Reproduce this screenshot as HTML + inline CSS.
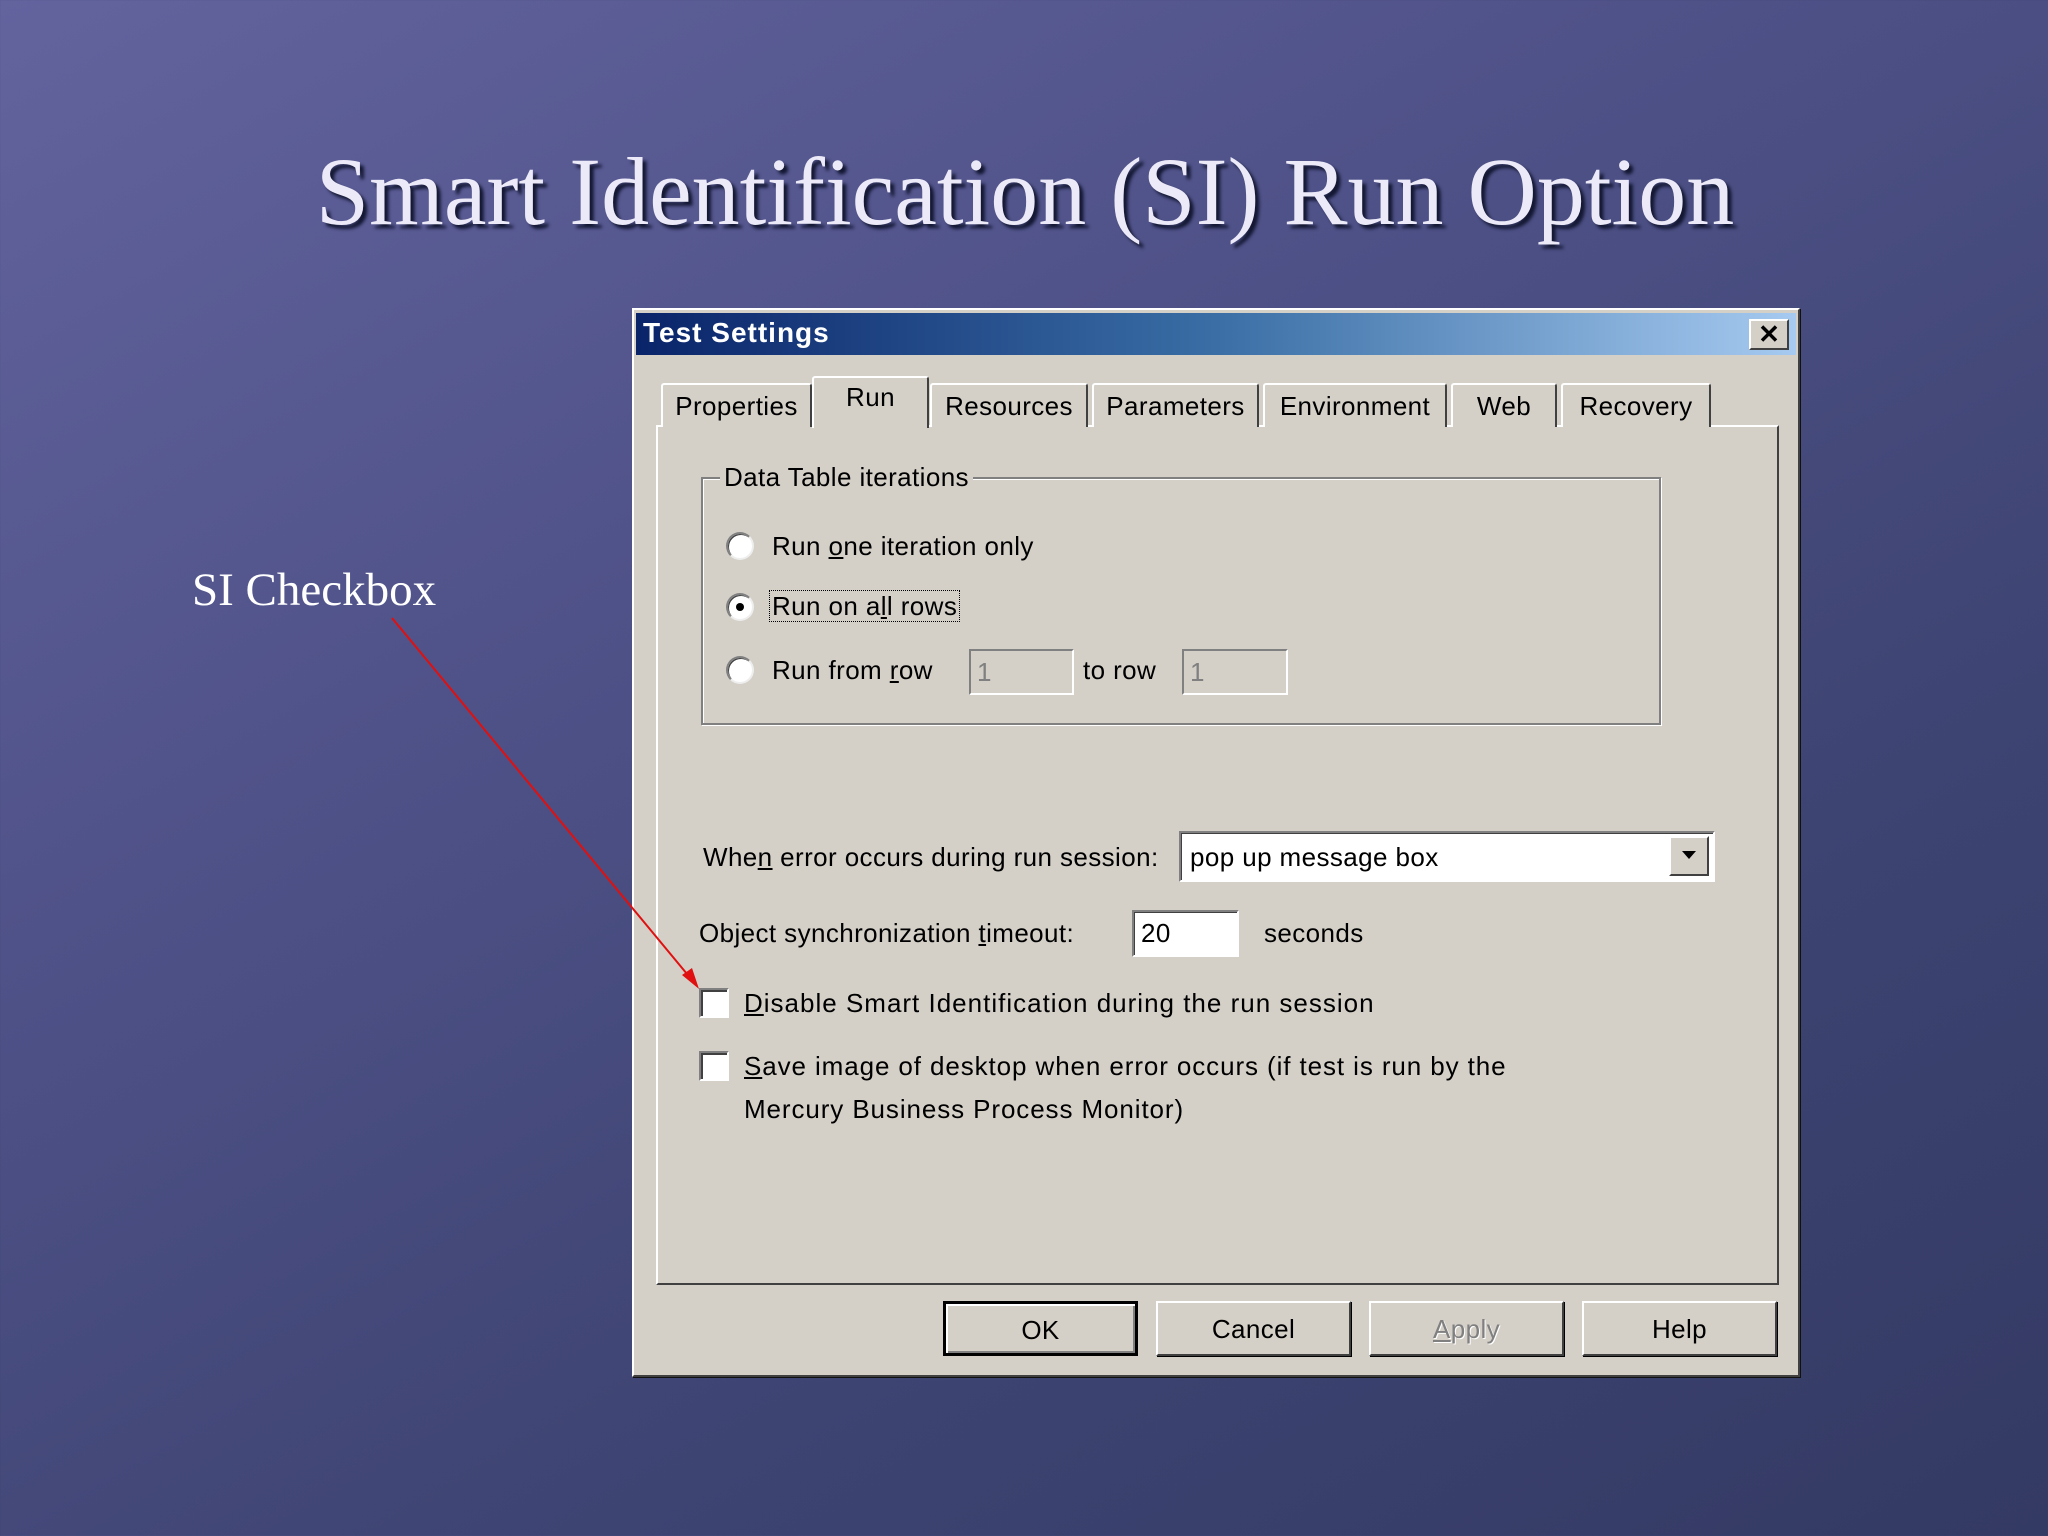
<!DOCTYPE html>
<html><head><meta charset="utf-8"><style>
*{margin:0;padding:0;box-sizing:border-box}
body{width:2048px;height:1536px;overflow:hidden;position:relative;font-family:"Liberation Sans",sans-serif;
background:linear-gradient(150deg,#63639e 0%,#4f5288 35%,#3f4574 65%,#333a63 100%)}
.a{position:absolute}
.t{font-size:26px;color:#000;white-space:nowrap;line-height:30px;letter-spacing:0.4px}
.title{left:0;width:2050px;top:132px;text-align:center;font-family:"Liberation Serif",serif;font-size:96px;color:#eceaf8;text-shadow:4px 4px 3px #141833;line-height:120px}
.dlg{left:632px;top:308px;width:1168px;height:1069px;background:#d4d0c8;border:2px solid #fff;border-right-color:#404040;border-bottom-color:#404040;box-shadow:1px 1px 0 #111}
.tb{left:636px;top:313px;width:1160px;height:42px;background:linear-gradient(90deg,#0a246a,#3a6ea5 50%,#a6caf0)}
.tab{position:absolute;top:383px;height:44px;background:#d4d0c8;border:2px solid #fff;border-bottom:none;border-right:2px solid #404040;border-radius:3px 3px 0 0;text-align:center;padding-top:6px}
.panel{left:656px;top:425px;width:1123px;height:860px;border:2px solid #fff;border-right-color:#404040;border-bottom-color:#404040}
.radio{width:28px;height:28px;border-radius:50%;background:#fff;border:2px solid #808080;border-bottom-color:#eee;border-right-color:#eee;box-shadow:inset 1px 1px 0 #404040}
.inp{background:#fff;border:2px solid #808080;border-right-color:#fff;border-bottom-color:#fff;box-shadow:inset 1px 1px 0 #404040}
.cb{width:30px;height:30px;background:#fff;border:2px solid #808080;border-right-color:#fff;border-bottom-color:#fff;box-shadow:inset 2px 2px 0 #404040}
.btn{top:1301px;height:55px;width:195px;border:2px solid #fff;border-right-color:#404040;border-bottom-color:#404040;box-shadow:1px 1px 0 #000;text-align:center;padding-top:11px}
u{text-decoration:underline}
</style></head><body>
<div class="a title">Smart Identification (SI) Run Option</div>
<div class="a" style="left:192px;top:563px;font-family:'Liberation Serif',serif;font-size:47px;color:#fff">SI Checkbox</div>

<div class="a dlg"></div>
<div class="a tb"></div>
<div class="a" style="left:643px;top:317px;font-size:28px;font-weight:bold;color:#fff;letter-spacing:1px">Test Settings</div>
<div class="a" style="left:1749px;top:319px;width:40px;height:31px;background:#d4d0c8;border:2px solid #fff;border-right-color:#404040;border-bottom-color:#404040;text-align:center;font-size:26px;font-weight:bold;line-height:26px">✕</div>

<div class="a panel"></div>
<div class="tab t" style="left:661px;width:151px">Properties</div>
<div class="tab t" style="left:930px;width:158px">Resources</div>
<div class="tab t" style="left:1092px;width:167px">Parameters</div>
<div class="tab t" style="left:1263px;width:184px">Environment</div>
<div class="tab t" style="left:1451px;width:106px">Web</div>
<div class="tab t" style="left:1561px;width:150px">Recovery</div>
<div class="tab t" style="left:812px;width:117px;top:376px;height:52px;padding-top:4px">Run</div>

<div class="a" style="left:701px;top:477px;width:960px;height:248px;border:2px solid #808080;box-shadow:1px 1px 0 #fff,inset 1px 1px 0 #fff"></div>
<div class="a t" style="left:720px;top:462px;background:#d4d0c8;padding:0 4px">Data Table iterations</div>

<div class="a radio" style="left:726px;top:532px"></div>
<div class="a t" style="left:772px;top:531px">Run <u>o</u>ne iteration only</div>
<div class="a radio" style="left:726px;top:593px"></div>
<div class="a" style="left:736px;top:603px;width:8px;height:8px;border-radius:50%;background:#000"></div>
<div class="a t" style="left:769px;top:590px;border:1px dotted #000;padding:0 2px">Run on a<u>l</u>l rows</div>
<div class="a radio" style="left:726px;top:656px"></div>
<div class="a t" style="left:772px;top:655px">Run from <u>r</u>ow</div>
<div class="a" style="left:969px;top:649px;width:105px;height:46px;border:2px solid #808080;border-right-color:#fff;border-bottom-color:#fff;color:#808080;font-size:26px;padding:6px 6px">1</div>
<div class="a t" style="left:1083px;top:655px">to row</div>
<div class="a" style="left:1182px;top:649px;width:106px;height:46px;border:2px solid #808080;border-right-color:#fff;border-bottom-color:#fff;color:#808080;font-size:26px;padding:6px 6px">1</div>

<div class="a t" style="left:703px;top:842px">Whe<u>n</u> error occurs during run session:</div>
<div class="a inp" style="left:1179px;top:831px;width:536px;height:51px"></div>
<div class="a t" style="left:1190px;top:842px">pop up message box</div>
<div class="a" style="left:1669px;top:836px;width:40px;height:40px;background:#d4d0c8;border:2px solid #fff;border-right-color:#404040;border-bottom-color:#404040"><div style="margin:13px auto 0;width:0;height:0;border-left:7px solid transparent;border-right:7px solid transparent;border-top:8px solid #000"></div></div>

<div class="a t" style="left:699px;top:918px">Object synchronization <u>t</u>imeout:</div>
<div class="a inp" style="left:1132px;top:910px;width:107px;height:47px"></div>
<div class="a t" style="left:1141px;top:918px">20</div>
<div class="a t" style="left:1264px;top:918px">seconds</div>

<div class="a cb" style="left:699px;top:988px"></div>
<div class="a t" style="left:744px;top:988px;letter-spacing:1px"><u>D</u>isable Smart Identification during the run session</div>
<div class="a cb" style="left:699px;top:1051px"></div>
<div class="a t" style="left:744px;top:1051px;letter-spacing:0.9px"><u>S</u>ave image of desktop when error occurs (if test is run by the</div>
<div class="a t" style="left:744px;top:1094px;letter-spacing:0.9px">Mercury Business Process Monitor)</div>

<div class="a btn t" style="left:943px;border:3px solid #000;box-shadow:inset 2px 2px 0 #fff,inset -2px -2px 0 #808080">OK</div>
<div class="a btn t" style="left:1156px">Cancel</div>
<div class="a btn t" style="left:1369px;color:#808080;text-shadow:1px 1px 0 #fff"><u>A</u>pply</div>
<div class="a btn t" style="left:1582px">Help</div>

<svg class="a" style="left:0;top:0" width="2048" height="1536">
<line x1="392" y1="618" x2="692" y2="980" stroke="#e01010" stroke-width="2"/>
<polygon points="699,989 682,975 692,968" fill="#e01010"/>
</svg>
</body></html>
